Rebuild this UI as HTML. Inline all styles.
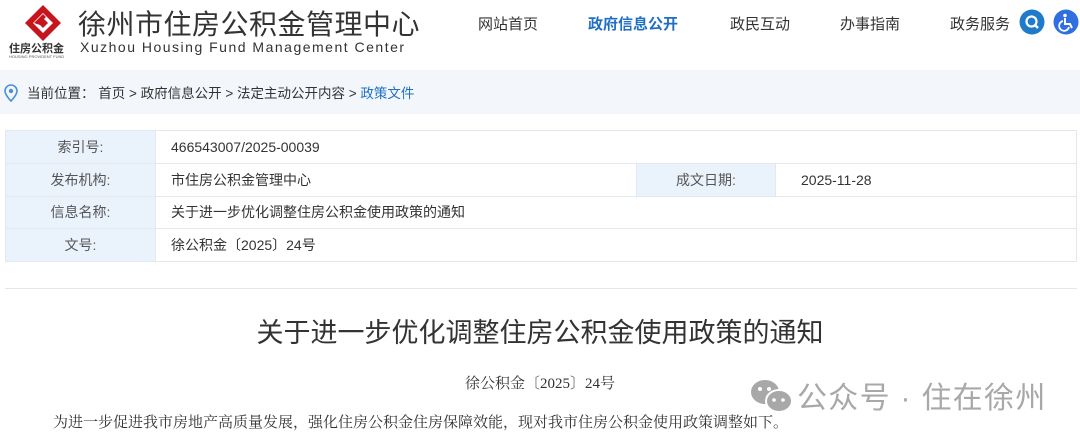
<!DOCTYPE html>
<html><head><meta charset="utf-8"><style>
body{margin:0;width:1080px;height:437px;overflow:hidden;background:#fff;font-family:"Liberation Sans","Noto Sans CJK SC",sans-serif;position:relative;color:#333}
.a{position:absolute;white-space:nowrap}
.nav{top:13px;font-size:15px;color:#333}
table{position:absolute;left:5px;top:130px;width:1072px;border-collapse:collapse;font-size:14px}
td{border:1px solid #e1e8f0;height:31.8px;padding:0}
td.l{background:#eaf2fc;text-align:center;color:#555;width:149px}
td.v{padding-left:15px;color:#333}
.serif{font-family:"Liberation Serif","Noto Serif CJK SC",serif}
</style></head><body>
<svg class="a" style="left:24px;top:4px" width="38" height="38" viewBox="0 0 38 38">
<path d="M19 1 L37 19 L19 37 L1 19 Z" fill="#c4161c"/>
<path d="M19 9 L29 19 L19 29 L9 19 Z" fill="#fff"/>
<path d="M19 14 L24 19 L19 24 L14 19 Z" fill="#c4161c"/>
<path d="M10 19 L19 10 L22 13 L16 19 L19 22 Z" fill="#c4161c"/>
</svg>
<div class="a" style="left:9px;top:40px;font-size:11px;font-weight:bold;color:#333">住房公积金</div>
<div class="a" style="left:9px;top:54px;font-size:4px;color:#555">HOUSING PROVIDENT FUND</div>
<div class="a" style="left:78px;top:3px;font-size:28px;color:#333;letter-spacing:0.5px">徐州市住房公积金管理中心</div>
<div class="a" style="left:80px;top:39px;font-size:14px;color:#333;letter-spacing:1.5px">Xuzhou Housing Fund Management Center</div>
<div class="a nav" style="left:478px">网站首页</div>
<div class="a nav" style="left:588px;color:#1f6fc5;font-weight:bold">政府信息公开</div>
<div class="a nav" style="left:730px">政民互动</div>
<div class="a nav" style="left:840px">办事指南</div>
<div class="a nav" style="left:950px">政务服务</div>
<svg class="a" style="left:1019px;top:9px" width="26" height="26"><circle cx="13" cy="13" r="12.5" fill="#1f7ac9"/><circle cx="12.5" cy="12.5" r="5" fill="none" stroke="#fff" stroke-width="2.2"/><path d="M16 16 L19 19" stroke="#fff" stroke-width="2.5"/></svg>
<svg class="a" style="left:1053px;top:9px" width="26" height="26"><circle cx="13" cy="13" r="12.5" fill="#2f6fe0"/><circle cx="12" cy="6.5" r="1.8" fill="#fff"/><path d="M12 9 V15 H17 L19 19" stroke="#fff" stroke-width="2" fill="none"/><path d="M10 12 A5 5 0 1 0 16 18" stroke="#fff" stroke-width="1.8" fill="none"/></svg>
<div class="a" style="left:0;top:70px;width:1080px;height:44px;background:#f3f7fc"></div>
<svg class="a" style="left:4px;top:84px" width="14" height="18"><path d="M7 1 A6 6 0 0 1 13 7 C13 11 7 17 7 17 C7 17 1 11 1 7 A6 6 0 0 1 7 1Z" fill="none" stroke="#4a90d9" stroke-width="1.6"/><circle cx="7" cy="7" r="2.2" fill="#4a90d9"/></svg>
<div class="a" style="left:27px;top:82px;font-size:13.5px;color:#333">当前位置：&nbsp;首页 &gt; 政府信息公开 &gt; 法定主动公开内容 &gt; <span style="color:#1f6fc5">政策文件</span></div>
<table>
<tr><td class="l">索引号:</td><td class="v" colspan="3">466543007/2025-00039</td></tr>
<tr><td class="l">发布机构:</td><td class="v" style="width:465px">市住房公积金管理中心</td><td class="l" style="width:138px">成文日期:</td><td class="v" style="padding-left:25px">2025-11-28</td></tr>
<tr><td class="l">信息名称:</td><td class="v" colspan="3">关于进一步优化调整住房公积金使用政策的通知</td></tr>
<tr><td class="l">文号:</td><td class="v" colspan="3">徐公积金〔2025〕24号</td></tr>
</table>
<div class="a" style="left:5px;top:288px;width:1072px;height:1px;background:#e6e6e6"></div>
<div class="a" style="left:0;width:1080px;text-align:center;top:311px;font-size:27px;color:#333">关于进一步优化调整住房公积金使用政策的通知</div>
<div class="a serif" style="left:0;width:1080px;text-align:center;top:372px;font-size:15px;color:#333">徐公积金〔2025〕24号</div>
<svg class="a" style="left:749px;top:378px" width="46" height="36"><ellipse cx="16" cy="14" rx="14" ry="12" fill="#a8a8a8"/><ellipse cx="30" cy="23" rx="13" ry="11" fill="#a8a8a8" stroke="#fff" stroke-width="2"/><circle cx="11" cy="11" r="2" fill="#fff"/><circle cx="20" cy="11" r="2" fill="#fff"/><circle cx="25" cy="22" r="1.8" fill="#fff"/><circle cx="34" cy="22" r="1.8" fill="#fff"/></svg>
<div class="a" style="left:797px;top:373px;font-size:30px;color:#a8a8a8;letter-spacing:1.3px">公众号 · 住在徐州</div>
<div class="a serif" style="left:53px;top:411px;font-size:15px;color:#333">为进一步促进我市房地产高质量发展，强化住房公积金住房保障效能，现对我市住房公积金使用政策调整如下。</div>
</body></html>
